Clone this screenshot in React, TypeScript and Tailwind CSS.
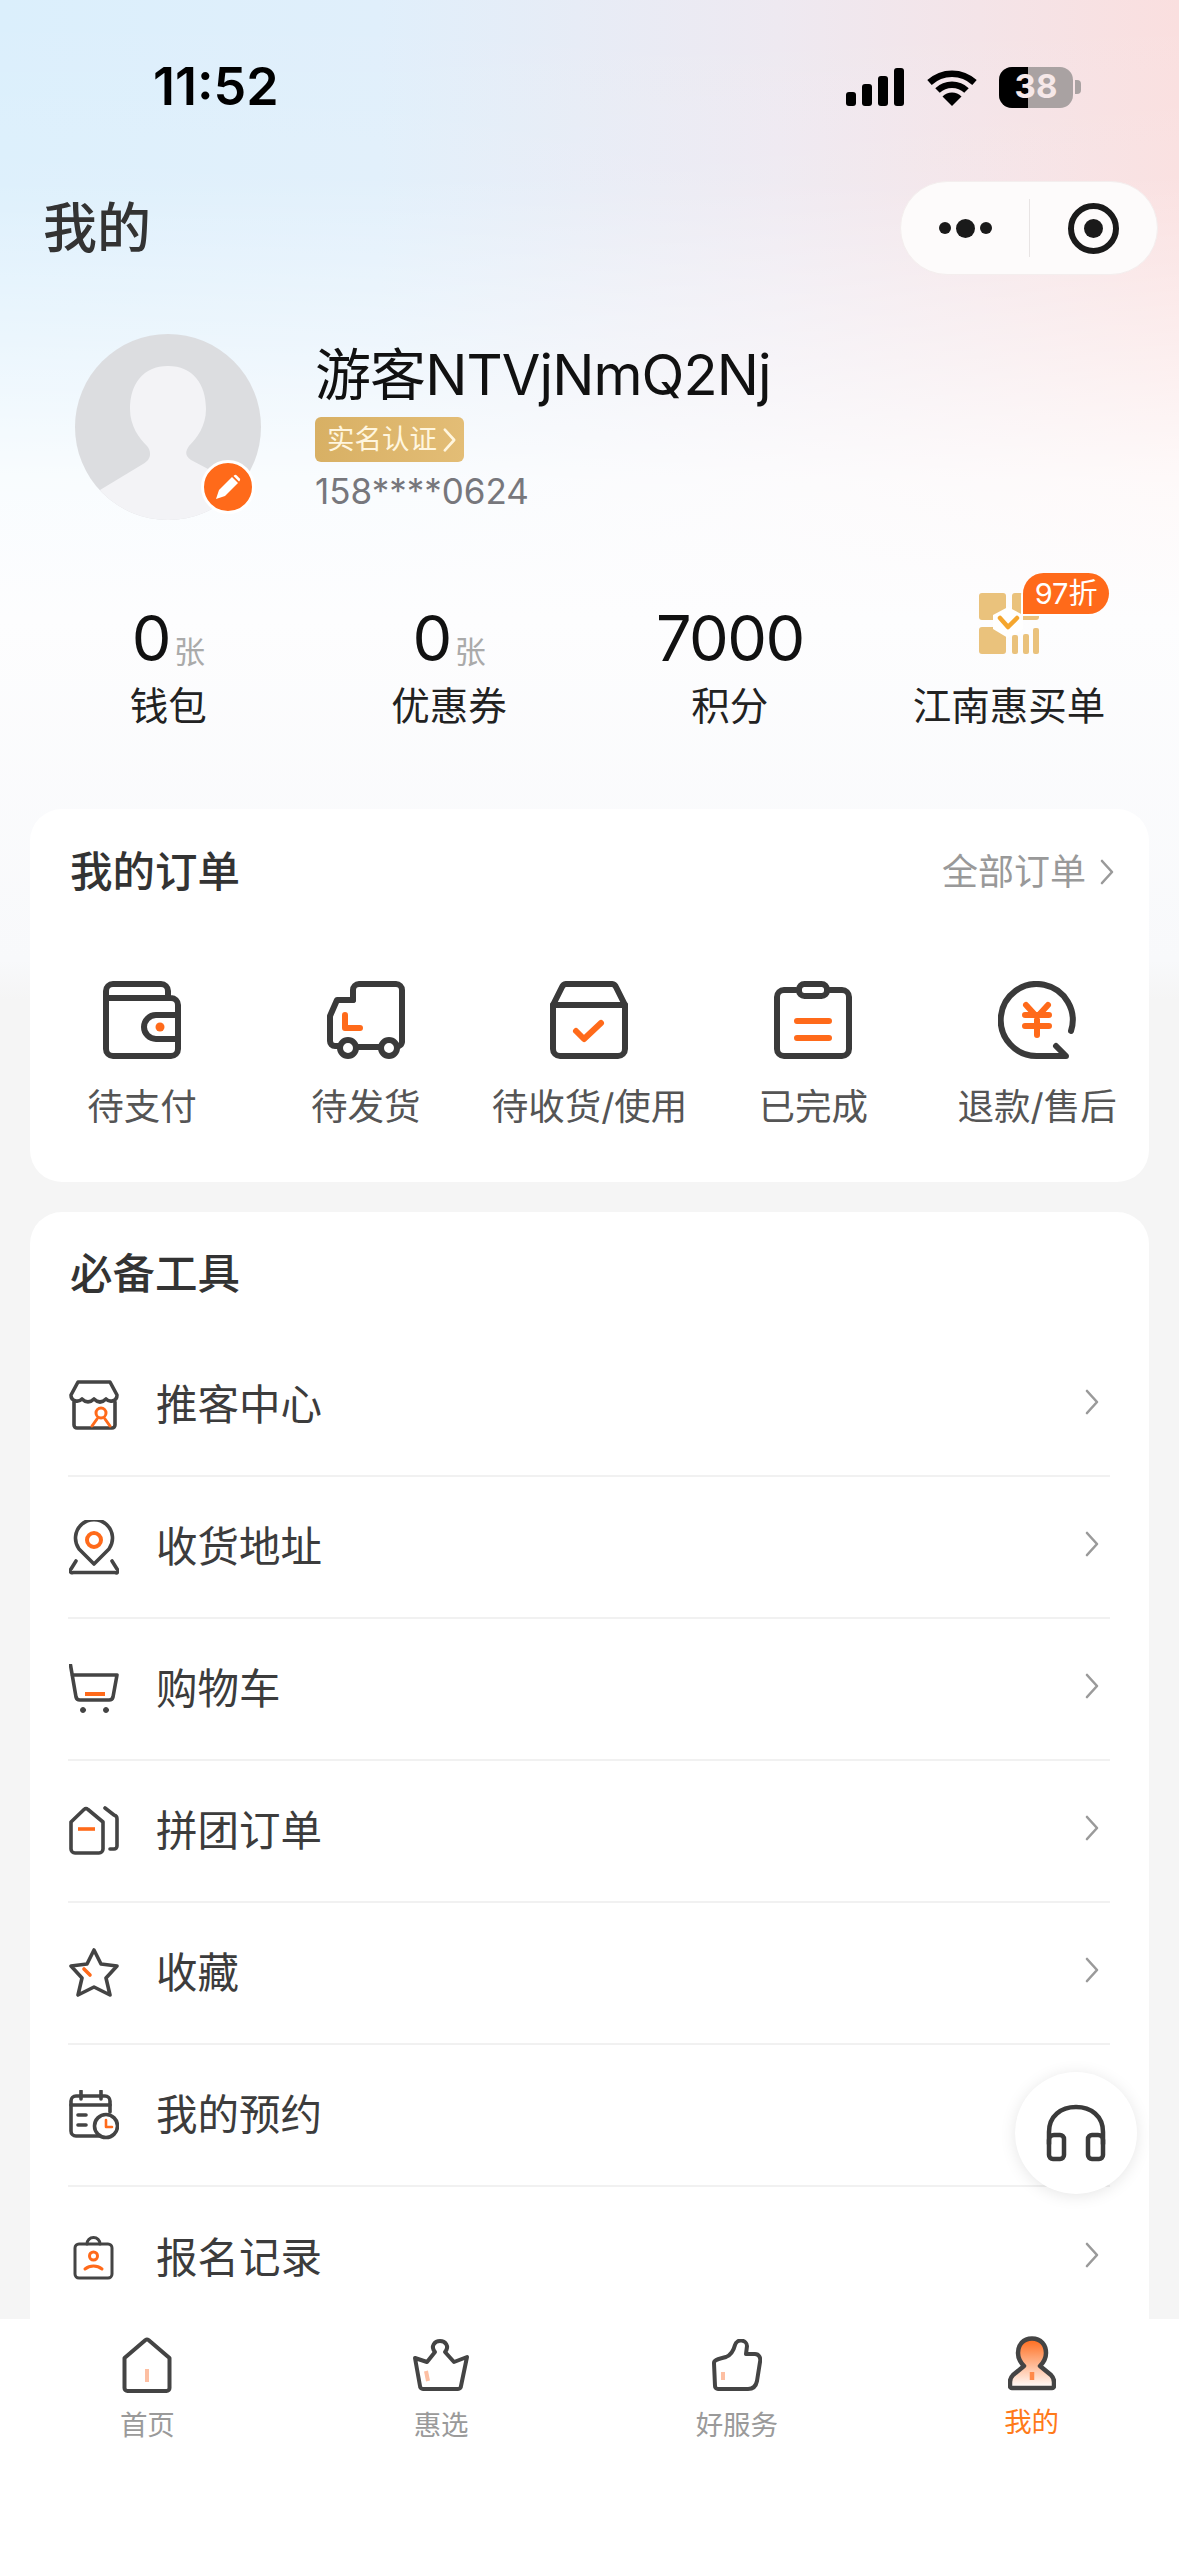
import React from "react";

const D = "#3a3a3a";
const G = "#444444";
const O = "#ff6a1a";

function Chevron({ className, color = "#9a9a9a", w = 3 }: { className: string; color?: string; w?: number }) {
  return (
    <svg viewBox="0 0 16 26" className={className} fill="none" stroke={color} strokeWidth={w} strokeLinecap="round" strokeLinejoin="round">
      <path d="M3 2L13 13L3 24" />
    </svg>
  );
}

const base = { fill: "none", strokeLinecap: "round", strokeLinejoin: "round" } as const;

function Order({ children }: { children: React.ReactNode }) {
  return (
    <svg viewBox="0 0 78 78" className="w-[78px] h-[78px]" stroke={D} strokeWidth={6} {...base}>
      {children}
    </svg>
  );
}

const orderItems: [string, React.ReactNode][] = [
  [
    "待支付",
    <Order>
      <path d="M3 17H68a7 7 0 0 1 7 7V68a7 7 0 0 1-7 7H10a7 7 0 0 1-7-7V10a7 7 0 0 1 7-7H58a7 7 0 0 1 7 7V17" />
      <path d="M75 34H53a12 12 0 0 0 0 24H75" />
      <circle cx="57" cy="46" r="4.5" fill={O} stroke="none" />
    </Order>,
  ],
  [
    "待发货",
    <Order>
      <path d="M26 19V9a6 6 0 0 1 6-6H69a6 6 0 0 1 6 6V61a5 5 0 0 1-3 4" />
      <path d="M26 19H10L3 35V60a5 5 0 0 0 5 5h5" />
      <path d="M29 66H54" />
      <circle cx="21" cy="67" r="8" />
      <circle cx="62" cy="67" r="8" />
      <path d="M18 34V47H33" stroke={O} />
    </Order>,
  ],
  [
    "待收货/使用",
    <Order>
      <path d="M3 24L12 6a5 5 0 0 1 4-3H62a5 5 0 0 1 4 3L75 24V68a7 7 0 0 1-7 7H10a7 7 0 0 1-7-7Z" />
      <path d="M3 24H75" />
      <path d="M26 50L34 58L51 42" stroke={O} />
    </Order>,
  ],
  [
    "已完成",
    <Order>
      <path d="M22 9H10a7 7 0 0 0-7 7V68a7 7 0 0 0 7 7H68a7 7 0 0 0 7-7V16a7 7 0 0 0-7-7H56" />
      <rect x="25" y="3" width="28" height="12" rx="5.5" />
      <path d="M23 40H55M23 57H55" stroke={O} />
    </Order>,
  ],
  [
    "退款/售后",
    <Order>
      <path d="M73 50A36 36 0 1 0 39 75H68L58 65" />
      <path d="M28 24L39 36L50 24M27 34H51M27 45H51M39 36V54" stroke={O} />
    </Order>,
  ],
];

function Tool({ h = 50, children }: { h?: number; children: React.ReactNode }) {
  return (
    <svg viewBox={`0 0 50 ${h}`} className="w-[50px] shrink-0" style={{ height: h }} stroke={G} strokeWidth={3.6} {...base}>
      {children}
    </svg>
  );
}

const tools: [string, React.ReactNode][] = [
  [
    "推客中心",
    <Tool>
      <path d="M9 2H41L48 15C48 21 41 23 37 19C33 23 29 23 25 19C21 23 17 23 13 19C9 23 2 21 2 15Z" />
      <path d="M5 22V45a3 3 0 0 0 3 3H43a3 3 0 0 0 3-3V22" />
      <circle cx="32" cy="33" r="5" stroke={O} strokeWidth={3} />
      <path d="M23 46L28 39M41 46L36 39" stroke={O} strokeWidth={3} />
    </Tool>,
  ],
  [
    "收货地址",
    <Tool h={55}>
      <path d="M25 44L10 29A18.5 18.5 0 1 1 40 29Z" />
      <circle cx="25" cy="20" r="7" stroke={O} strokeWidth={4} />
      <path d="M7 41L2 49a2 2 0 0 0 2 3.500H46a2 2 0 0 0 2-3.500L43 41" />
    </Tool>,
  ],
  [
    "购物车",
    <Tool>
      <path d="M1.500 1L7 33a4 4 0 0 0 4 3H40a4 4 0 0 0 4-3L48 11H3" />
      <circle cx="14" cy="46" r="2.500" fill={G} strokeWidth={1} />
      <circle cx="37" cy="46" r="2.500" fill={G} strokeWidth={1} />
      <path d="M16 30H36" stroke={O} strokeWidth={4} strokeLinecap="butt" />
    </Tool>,
  ],
  [
    "拼团订单",
    <Tool>
      <path d="M2 16L15 3.500a3 3 0 0 1 4 0L34 16V43a4 4 0 0 1-4 4H6a4 4 0 0 1-4-4Z" />
      <path d="M36 2L45 9a4 4 0 0 1 3 4V40a3 3 0 0 1-3 3H41" />
      <path d="M9 23H26" stroke={O} strokeWidth={3.600} strokeLinecap="butt" />
    </Tool>,
  ],
  [
    "收藏",
    <Tool>
      <path d="M25 2L32 16L48 18L37 30L41 47L25 39L9 47L13 30L2 18L18 16Z" />
      <path d="M15 21L21 27" stroke={O} />
    </Tool>,
  ],
  [
    "我的预约",
    <Tool>
      <path d="M34 46H7a5 5 0 0 1-5-5V11a5 5 0 0 1 5-5H36a5 5 0 0 1 5 5V22" />
      <path d="M2 15H41M12 1V9M32 1V9M9 25H17M9 35H17" />
      <circle cx="37" cy="36" r="11.500" fill="#fff" />
      <path d="M37 30V37H43" stroke={O} strokeWidth={2.600} />
    </Tool>,
  ],
  [
    "报名记录",
    <Tool h={44}>
      <rect x="6" y="8" width="37" height="34" rx="4" strokeWidth={3} />
      <path d="M18 8a6.500 6.500 0 0 1 13 0" strokeWidth={3} />
      <circle cx="24.500" cy="20" r="4" stroke={O} strokeWidth={3} />
      <path d="M16 33C21 29 28 29 33 33" stroke={O} strokeWidth={3} />
    </Tool>,
  ],
];

function StatNum({ n, unit }: { n: string; unit?: boolean }) {
  return (
    <div className="h-[70px] pt-[3px] flex items-end justify-center">
      <span className="text-[63px] leading-[67px] text-[#111] tracking-[-1.500px]">{n}</span>
      {unit && <span className="text-[31px] leading-[41px] text-[#aaaaaa] ml-[4px]">张</span>}
    </div>
  );
}

function Label({ t, className = "" }: { t: string; className?: string }) {
  return <div className={`mt-[9px] h-[50px] text-[38.500px] leading-[50px] text-[#222] whitespace-nowrap ${className}`}>{t}</div>;
}

export default function App() {
  return (
    <div className="relative w-[1179px] h-[2556px] overflow-hidden flex flex-col font-[Inter,'Noto_Sans_CJK_SC',sans-serif] bg-[#f5f5f5] bg-[linear-gradient(180deg,rgba(255,255,255,0)_0px,rgba(255,255,255,0.08)_180px,rgba(255,255,255,0.45)_340px,rgba(255,255,255,0.82)_480px,rgba(253,253,254,1)_620px,rgba(248,249,251,1)_960px,rgba(245,245,245,1)_1000px),linear-gradient(90deg,#dbeffc_0%,#e0effb_32%,#eee9f1_66%,#fadfdf_100%)]">
      <main className="h-[2319px] shrink-0 overflow-hidden">
        {/* status bar */}
        <div className="h-[170px] pt-[4px] pl-[153px] pr-[98px] flex items-center justify-between">
          <span className="text-[52px] font-semibold text-black">11:52</span>
          <div className="flex items-center">
            <div className="flex items-end gap-[6px] h-[38px]">
              <div className="w-[10px] h-[14px] rounded-[3px] bg-black" />
              <div className="w-[10px] h-[22px] rounded-[3px] bg-black" />
              <div className="w-[10px] h-[30px] rounded-[3px] bg-black" />
              <div className="w-[10px] h-[38px] rounded-[3px] bg-black" />
            </div>
            <svg viewBox="0 0 50 37" className="w-[50px] h-[37px] ml-[23px]" fill="none" stroke="#000" strokeWidth={6.500}>
              <path d="M2.500 13.500A33 33 0 0 1 47.500 13.500" />
              <path d="M10.500 21.500A21 21 0 0 1 39.500 21.500" />
              <path d="M25 37L15.500 27.500A13.500 13.500 0 0 1 34.500 27.500Z" fill="#000" stroke="none" />
            </svg>
            <div className="ml-[22px] relative w-[74px] h-[41px] rounded-[13px] bg-[#a9a2a2] overflow-hidden">
              <div className="w-[29px] h-full bg-black" />
              <span className="absolute inset-0 flex items-center justify-center text-[33px] font-bold text-[#f5e8e8]">38</span>
            </div>
            <div className="ml-[2px] w-[6px] h-[14px] rounded-r-[4px] bg-[#a9a2a2]" />
          </div>
        </div>

        {/* nav */}
        <div className="mt-[11px] h-[94px] pl-[43px] pr-[21px] flex items-center justify-between">
          <span className="text-[54px] leading-[70px] font-medium text-[#333] mt-[2px]">我的</span>
          <div className="w-[258px] h-[94px] rounded-full bg-[#fdfbfb] border border-[#f4eeee] flex items-center">
            <div className="w-[128px] flex items-center justify-center gap-[5px]">
              <div className="w-[12px] h-[12px] rounded-full bg-[#1a1a1a]" />
              <div className="w-[19px] h-[19px] rounded-full bg-[#1a1a1a]" />
              <div className="w-[12px] h-[12px] rounded-full bg-[#1a1a1a]" />
            </div>
            <div className="w-px h-[58px] bg-[#e8e4e4]" />
            <div className="flex-1 flex items-center justify-center">
              <div className="w-[51px] h-[51px] rounded-full border-[6px] border-[#1a1a1a] flex items-center justify-center">
                <div className="w-[19px] h-[19px] rounded-full bg-[#1a1a1a]" />
              </div>
            </div>
          </div>
        </div>

        {/* profile */}
        <div className="mt-[59px] pl-[75px] flex">
          <div className="relative w-[186px] h-[186px] shrink-0">
            <svg viewBox="0 0 186 186" className="w-[186px] h-[186px]">
              <defs>
                <clipPath id="av">
                  <circle cx="93" cy="93" r="93" />
                </clipPath>
              </defs>
              <circle cx="93" cy="93" r="93" fill="#dcdde0" />
              <path
                clipPath="url(#av)"
                d="M93 32C118 32 131 50 131 75C131 92 122 104 114 112C110 118 110 122 116 126L190 165V190H-4V172L25 156L68 130C76 126 77 118 72 112C64 104 55 92 55 75C55 50 68 32 93 32Z"
                fill="#f3f3f6"
              />
            </svg>
            <div className="absolute left-[126px] top-[126px] w-[54px] h-[54px] rounded-full bg-[#ff6a1a] border-[3px] border-white flex items-center justify-center">
              <svg viewBox="0 0 28 28" className="w-[28px] h-[28px]">
                <path d="M2 26L5 17L18 4L24 10L11 23Z" fill="#fff" />
                <path d="M20 2.500a2 2 0 0 1 2.800 0L25.500 5.200a2 2 0 0 1 0 2.800L25 8.500L19.500 3Z" fill="#fff" />
              </svg>
            </div>
          </div>
          <div className="ml-[54px]">
            <div className="h-[72px] mt-[5px] text-[56px] leading-[72px] text-[#111] tracking-[-0.900px]">游客NTVjNmQ2Nj</div>
            <div className="mt-[6px] w-[149px] h-[45px] rounded-[6px] bg-[linear-gradient(90deg,#d8b064,#e3bd76)] flex items-center pl-[12px]">
              <span className="text-[27.500px] leading-[45px] text-[#fff6df]">实名认证</span>
              <Chevron className="w-[15px] h-[26px] ml-[5px]" color="#fff6df" w={2.800} />
            </div>
            <div className="mt-[6px] text-[35px] leading-[46px] text-[#77777c]">158****0624</div>
          </div>
        </div>

        {/* stats */}
        <div className="mt-[82px] mx-[28px] grid grid-cols-4">
          <div className="flex flex-col items-center">
            <StatNum n="0" unit />
            <Label t="钱包" />
          </div>
          <div className="flex flex-col items-center">
            <StatNum n="0" unit />
            <Label t="优惠券" />
          </div>
          <div className="flex flex-col items-center">
            <StatNum n="7000" />
            <Label t="积分" />
          </div>
          <div className="flex flex-col items-center">
            <div className="relative h-[70px] w-[60px] ml-[-3px]">
              <svg viewBox="0 0 60 61" className="w-[60px] h-[61px] mt-[-9px]">
                <rect x="0" y="0" width="27" height="27" rx="3" fill="#eac27c" />
                <rect x="33" y="0" width="27" height="27" rx="3" fill="#eac27c" />
                <rect x="0" y="34" width="27" height="27" rx="3" fill="#eac27c" />
                <path d="M29 14L44 22V36L29 45L14 36V22Z" fill="#fff" />
                <path d="M21 25L29 34L38 25" fill="none" stroke="#f5a62e" strokeWidth={4.500} strokeLinecap="round" strokeLinejoin="round" />
                <rect x="33" y="42" width="6" height="19" rx="2" fill="#eac27c" />
                <rect x="44" y="41" width="6" height="20" rx="2" fill="#eac27c" />
                <rect x="54" y="35" width="6" height="26" rx="2" fill="#eac27c" />
              </svg>
              <div className="absolute left-[44px] top-[-29px] w-[86px] h-[41px] rounded-full rounded-bl-[10px] bg-[#ff6a1a] flex items-center justify-center text-[29px] leading-[41px] text-white shadow-[-2px_2px_0_#fff]">
                97折
              </div>
            </div>
            <Label t="江南惠买单" className="ml-[-3px]" />
          </div>
        </div>

        {/* orders */}
        <section className="mt-[78px] mx-[30px] h-[373px] rounded-[32px] bg-white">
          <div className="h-[126px] pl-[40px] pr-[34px] flex items-center justify-between">
            <span className="text-[42.500px] font-medium text-[#333]">我的订单</span>
            <div className="flex items-center">
              <span className="text-[36px] text-[#999]">全部订单</span>
              <Chevron className="w-[16px] h-[26px] ml-[13px]" w={2.600} />
            </div>
          </div>
          <div className="mt-[46px] grid grid-cols-5">
            {orderItems.map(([t, ic]) => (
              <div key={t} className="flex flex-col items-center">
                {ic}
                <div className="mt-[25px] h-[46px] text-[36.500px] leading-[46px] text-[#555] whitespace-nowrap">{t}</div>
              </div>
            ))}
          </div>
        </section>

        {/* tools */}
        <section className="mt-[30px] mx-[30px] rounded-[32px] bg-white pb-[40px]">
          <div className="h-[123px] pl-[40px] flex items-center text-[42.500px] font-medium text-[#333]">必备工具</div>
          <div className="ml-[38px] mr-[39px]">
            {tools.map(([t, ic], i) => (
              <div key={t} className={`h-[142px] flex items-center ${i < tools.length - 1 ? "border-b-2 border-[#f1f1f1]" : ""}`}>
                <div className="w-[88px] pl-px flex items-center">{ic}</div>
                <span className="text-[41.500px] text-[#3c3c3c] flex-1">{t}</span>
                <Chevron className="w-[16px] h-[26px] mr-[10px] mt-[-6px]" w={2.600} />
              </div>
            ))}
          </div>
        </section>
      </main>

      {/* tab bar */}
      <nav className="flex-1 bg-white grid grid-cols-4 items-start">
        <div className="flex flex-col items-center pt-[17px]">
          <div className="h-[58px] flex items-center">
            <svg viewBox="0 0 50 56" className="w-[50px] h-[56px]" stroke={G} strokeWidth={4} {...base}>
              <path d="M2.500 21L23.500 3a2.500 2.500 0 0 1 3 0L47.500 21V51a3 3 0 0 1-3 3H5.500a3 3 0 0 1-3-3Z" />
              <path d="M25 32V45" stroke="#fdbfa2" strokeLinecap="butt" />
            </svg>
          </div>
          <div className="mt-[13px] text-[27.500px] leading-[36px] text-[#9a9a9a]">首页</div>
        </div>
        <div className="flex flex-col items-center pt-[17px]">
          <div className="h-[58px] flex items-center">
            <svg viewBox="0 0 58 52" className="w-[58px] h-[52px] ml-[-2px]" stroke={G} strokeWidth={4} {...base}>
              <path d="M3 19L15 23L23 13C18 7 23 2 28 2C33 2 38 7 33 13L42 23L55 18L49 47a3 3 0 0 1-3 3H11a3 3 0 0 1-3-3Z" />
              <path d="M14 32L16 42" stroke="#fdbfa2" strokeLinecap="butt" />
            </svg>
          </div>
          <div className="mt-[13px] ml-[-2px] text-[27.500px] leading-[36px] text-[#9a9a9a]">惠选</div>
        </div>
        <div className="flex flex-col items-center pt-[17px]">
          <div className="h-[58px] flex items-center">
            <svg viewBox="0 0 50 52" className="w-[50px] h-[52px]" stroke={G} strokeWidth={4} {...base}>
              <path d="M2 24C2 20 8 20 14 18C19 16 22 10 23 6C25 -1 35 1 35 7L34 15H43C47 15 49 19 48 23L45 42C44 47 41 50 36 50H6a3 3 0 0 1-3-3Z" />
              <path d="M11 33V41" stroke="#fdbfa2" strokeLinecap="butt" />
            </svg>
          </div>
          <div className="mt-[13px] text-[27.500px] leading-[36px] text-[#9a9a9a]">好服务</div>
        </div>
        <div className="flex flex-col items-center pt-[17px]">
          <div className="h-[58px] flex items-start">
            <svg viewBox="0 0 48 55" className="w-[48px] h-[55px]" stroke={G} strokeWidth={4.500} {...base}>
              <defs>
                <linearGradient id="ug" x1="0" y1="0" x2="0" y2="1">
                  <stop offset="0" stopColor="#ff6a1a" />
                  <stop offset="1" stopColor="#ffffff" />
                </linearGradient>
              </defs>
              <path
                fill="url(#ug)"
                d="M24 2.500C33 2.500 38 9 38 17C38 23 35 27 32 30L43 39C45 41 46 43 46 46V50a2 2 0 0 1-2 2H4a2 2 0 0 1-2-2V46C2 43 3 41 5 39L16 30C13 27 10 23 10 17C10 9 15 2.500 24 2.500Z"
              />
              <path d="M24 36V44" stroke="#ff8a4a" strokeLinecap="butt" />
            </svg>
          </div>
          <div className="mt-[10px] text-[27.500px] leading-[36px] text-[#ff7a1a]">我的</div>
        </div>
      </nav>

      {/* floating service button */}
      <div className="absolute left-[1015px] top-[2072px] w-[122px] h-[122px] rounded-full bg-white shadow-[0_2px_16px_rgba(0,0,0,0.1)] flex items-center justify-center">
        <svg viewBox="0 0 60 58" className="w-[60px] h-[58px]" stroke="#3a3a3a" strokeWidth={4.500} {...base}>
          <path d="M3 40V28C3 12 15 3 30 3C45 3 57 12 57 28V40" />
          <path d="M3 36C3 33 5 31 8 31H14a4 4 0 0 1 4 4V51a4 4 0 0 1-4 4H7a4 4 0 0 1-4-4Z" />
          <path d="M57 36C57 33 55 31 52 31H46a4 4 0 0 0-4 4V51a4 4 0 0 0 4 4H53a4 4 0 0 0 4-4Z" />
        </svg>
      </div>
    </div>
  );
}
